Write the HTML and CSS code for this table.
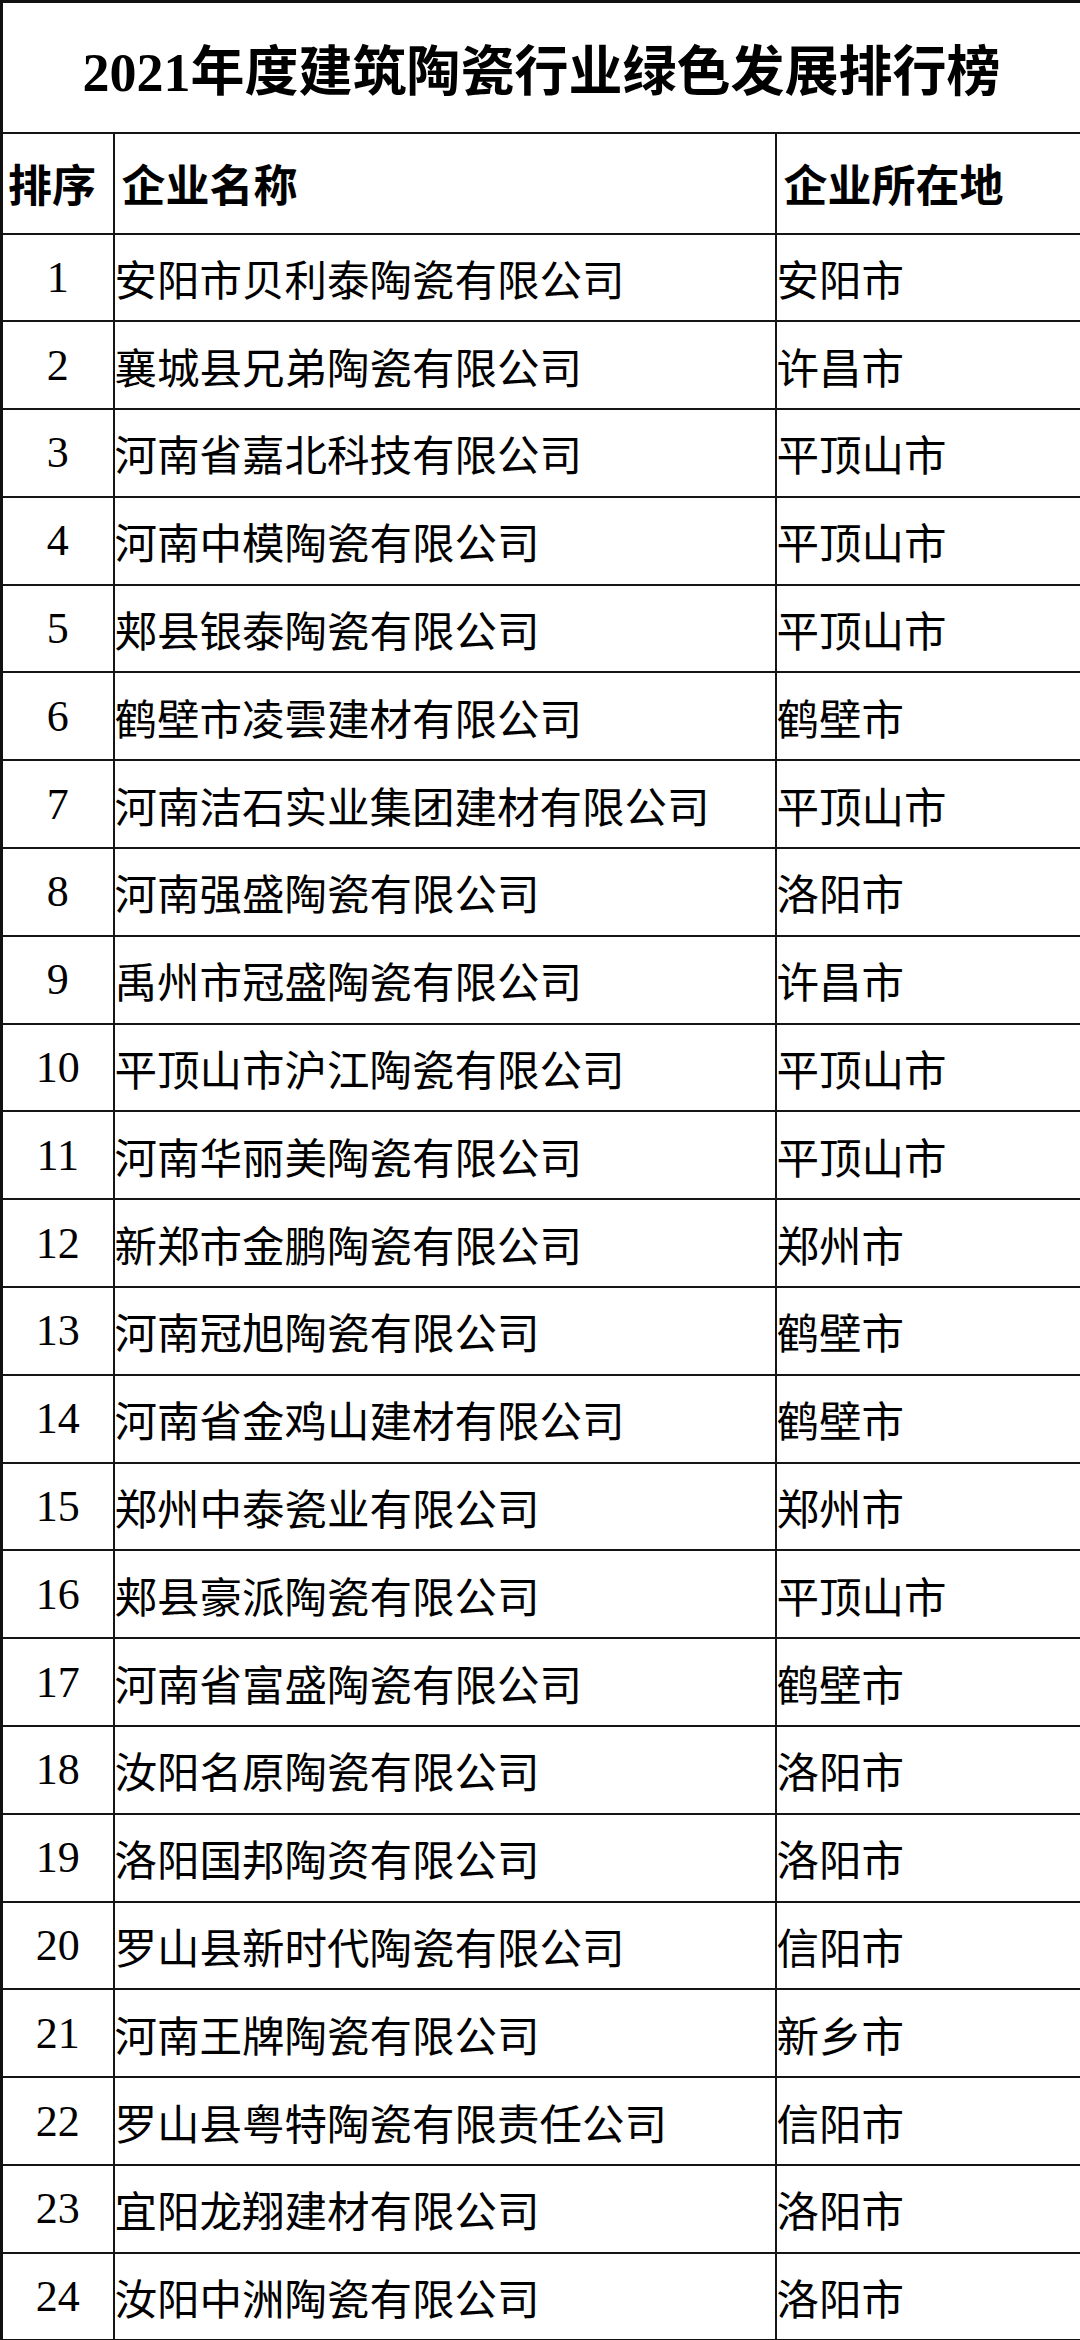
FILE: index.html
```html
<!DOCTYPE html>
<html lang="zh-CN">
<head>
<meta charset="utf-8">
<title>2021年度建筑陶瓷行业绿色发展排行榜</title>
<link rel="stylesheet" href="styles.css">
</head>
<body>
<table class="rank">
  <colgroup>
    <col class="c-no">
    <col class="c-name">
    <col class="c-loc">
  </colgroup>
  <thead>
    <tr class="title-row"><th colspan="3" class="title">2021年度建筑陶瓷行业绿色发展排行榜</th></tr>
    <tr class="head-row">
      <th class="h-no">排序</th>
      <th class="h-name">企业名称</th>
      <th class="h-loc">企业所在地</th>
    </tr>
  </thead>
  <tbody>
    <tr><td class="no">1</td><td class="name">安阳市贝利泰陶瓷有限公司</td><td class="loc">安阳市</td></tr>
    <tr><td class="no">2</td><td class="name">襄城县兄弟陶瓷有限公司</td><td class="loc">许昌市</td></tr>
    <tr><td class="no">3</td><td class="name">河南省嘉北科技有限公司</td><td class="loc">平顶山市</td></tr>
    <tr><td class="no">4</td><td class="name">河南中模陶瓷有限公司</td><td class="loc">平顶山市</td></tr>
    <tr><td class="no">5</td><td class="name">郏县银泰陶瓷有限公司</td><td class="loc">平顶山市</td></tr>
    <tr><td class="no">6</td><td class="name">鹤壁市凌雲建材有限公司</td><td class="loc">鹤壁市</td></tr>
    <tr><td class="no">7</td><td class="name">河南洁石实业集团建材有限公司</td><td class="loc">平顶山市</td></tr>
    <tr><td class="no">8</td><td class="name">河南强盛陶瓷有限公司</td><td class="loc">洛阳市</td></tr>
    <tr><td class="no">9</td><td class="name">禹州市冠盛陶瓷有限公司</td><td class="loc">许昌市</td></tr>
    <tr><td class="no">10</td><td class="name">平顶山市沪江陶瓷有限公司</td><td class="loc">平顶山市</td></tr>
    <tr><td class="no">11</td><td class="name">河南华丽美陶瓷有限公司</td><td class="loc">平顶山市</td></tr>
    <tr><td class="no">12</td><td class="name">新郑市金鹏陶瓷有限公司</td><td class="loc">郑州市</td></tr>
    <tr><td class="no">13</td><td class="name">河南冠旭陶瓷有限公司</td><td class="loc">鹤壁市</td></tr>
    <tr><td class="no">14</td><td class="name">河南省金鸡山建材有限公司</td><td class="loc">鹤壁市</td></tr>
    <tr><td class="no">15</td><td class="name">郑州中泰瓷业有限公司</td><td class="loc">郑州市</td></tr>
    <tr><td class="no">16</td><td class="name">郏县豪派陶瓷有限公司</td><td class="loc">平顶山市</td></tr>
    <tr><td class="no">17</td><td class="name">河南省富盛陶瓷有限公司</td><td class="loc">鹤壁市</td></tr>
    <tr><td class="no">18</td><td class="name">汝阳名原陶瓷有限公司</td><td class="loc">洛阳市</td></tr>
    <tr><td class="no">19</td><td class="name">洛阳国邦陶资有限公司</td><td class="loc">洛阳市</td></tr>
    <tr><td class="no">20</td><td class="name">罗山县新时代陶瓷有限公司</td><td class="loc">信阳市</td></tr>
    <tr><td class="no">21</td><td class="name">河南王牌陶瓷有限公司</td><td class="loc">新乡市</td></tr>
    <tr><td class="no">22</td><td class="name">罗山县粤特陶瓷有限责任公司</td><td class="loc">信阳市</td></tr>
    <tr><td class="no">23</td><td class="name">宜阳龙翔建材有限公司</td><td class="loc">洛阳市</td></tr>
    <tr><td class="no">24</td><td class="name">汝阳中洲陶瓷有限公司</td><td class="loc">洛阳市</td></tr>
  </tbody>
</table>
</body>
</html>
```
FILE: styles.css
```css
html, body {
  margin: 0;
  padding: 0;
  background: #ffffff;
}

.rank {
  width: 1080px;
  table-layout: fixed;
  border-collapse: collapse;
  border: 3px solid #111;
  color: #000;
  font-family: "Noto Sans CJK SC", sans-serif;
}

.c-no { width: 112px; }
.c-name { width: 662px; }
.c-loc { width: 306px; }

.rank th,
.rank td {
  border: 2px solid #151515;
  padding: 0;
  vertical-align: middle;
  overflow: hidden;
  white-space: nowrap;
}

.title-row { height: 131px; }
.title {
  font-family: "Liberation Serif", "Noto Sans CJK SC", serif;
  font-weight: 700;
  font-size: 54px;
  text-align: center;
  padding-top: 8px;
  letter-spacing: 0;
}

.head-row { height: 101px; }
.head-row th {
  font-weight: 700;
  font-size: 44px;
  text-align: left;
  padding-left: 7px;
}
.head-row .h-no {
  padding-left: 5px;
}

.rank tbody tr { height: 87.8px; }

.no {
  font-family: "Liberation Serif", serif;
  font-size: 44px;
  text-align: center;
  padding-left: 4px;
}

.name,
.loc {
  font-size: 42.5px;
  font-weight: 400;
  padding-left: 8px;
  padding-top: 3px;
}

.loc { padding-left: 9px; }
```
